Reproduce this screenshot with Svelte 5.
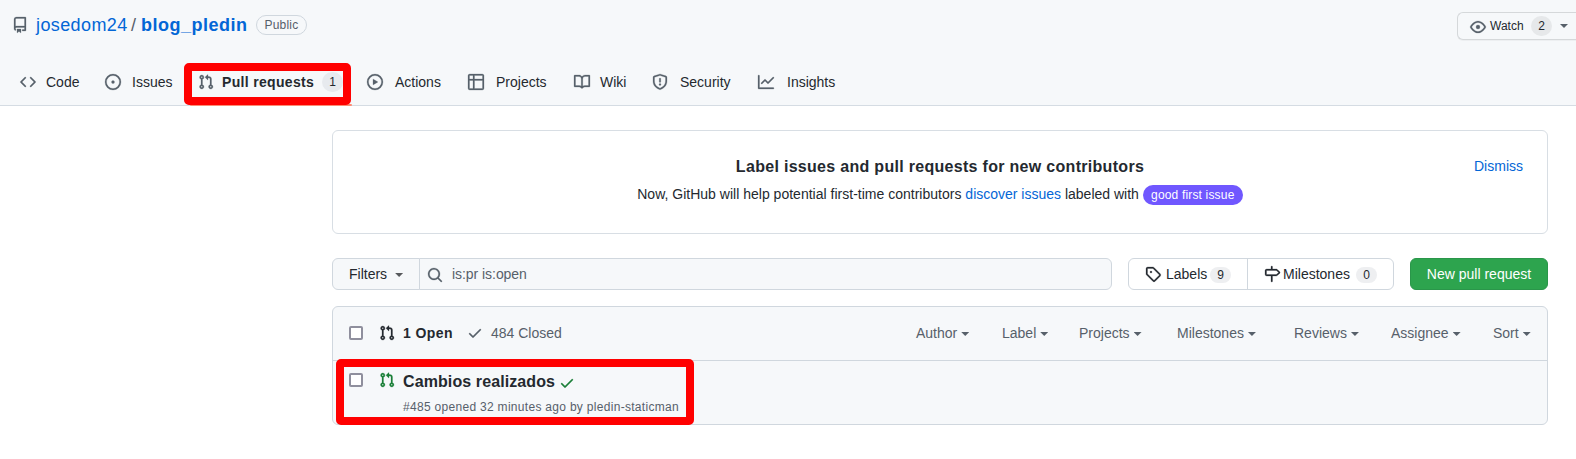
<script>
  const icons = {
    repo: 'M2 2.5A2.5 2.5 0 014.5 0h8.75a.75.75 0 01.75.75v12.5a.75.75 0 01-.75.75h-2.5a.75.75 0 110-1.5h1.75v-2h-8a1 1 0 00-.714 1.7.75.75 0 01-1.072 1.05A2.495 2.495 0 012 11.5v-9zm10.5-1V9h-8c-.356 0-.694.074-1 .208V2.5a1 1 0 011-1h8zM5 12.25v3.25a.25.25 0 00.4.2l1.45-1.087a.25.25 0 01.3 0L8.6 15.7a.25.25 0 00.4-.2v-3.25a.25.25 0 00-.25-.25h-3.5a.25.25 0 00-.25.25z',
    code: 'M4.72 3.22a.75.75 0 011.06 1.06L2.06 8l3.72 3.72a.75.75 0 11-1.06 1.06L.47 8.53a.75.75 0 010-1.06l4.25-4.25zm6.56 0a.75.75 0 10-1.06 1.06L13.94 8l-3.72 3.72a.75.75 0 101.06 1.06l4.25-4.25a.75.75 0 000-1.06l-4.25-4.25z',
    issue: 'M8 9.5a1.5 1.5 0 100-3 1.5 1.5 0 000 3zM8 0a8 8 0 100 16A8 8 0 008 0zM1.5 8a6.5 6.5 0 1113 0 6.5 6.5 0 01-13 0z',
    pr: 'M7.177 3.073L9.573.677A.25.25 0 0110 .854v4.792a.25.25 0 01-.427.177L7.177 3.427a.25.25 0 010-.354zM3.75 2.5a.75.75 0 100 1.5.75.75 0 000-1.5zm-2.25.75a2.25 2.25 0 113 2.122v5.256a2.251 2.251 0 11-1.5 0V5.372A2.25 2.25 0 011.5 3.25zM11 2.5h-1V4h1a1 1 0 011 1v5.628a2.251 2.251 0 101.5 0V5A2.5 2.5 0 0011 2.5zm1 10.25a.75.75 0 111.5 0 .75.75 0 01-1.5 0zM3.75 12a.75.75 0 100 1.5.75.75 0 000-1.5z',
    play: 'M1.5 8a6.5 6.5 0 1113 0 6.5 6.5 0 01-13 0zM8 0a8 8 0 100 16A8 8 0 008 0zM6.379 5.227A.25.25 0 006 5.442v5.117a.25.25 0 00.379.214l4.264-2.559a.25.25 0 000-.428L6.379 5.227z',
    table: 'M0 1.75C0 .784.784 0 1.75 0h12.5C15.216 0 16 .784 16 1.75v12.5A1.75 1.75 0 0114.25 16H1.75A1.75 1.75 0 010 14.25V1.75zM1.5 6.5v7.75c0 .138.112.25.25.25H5v-8H1.5zM5 5H1.5V1.75a.25.25 0 01.25-.25H5V5zm1.5 1.5v8h7.75a.25.25 0 00.25-.25V6.5h-8zm8-1.5h-8V1.5h7.75a.25.25 0 01.25.25V5z',
    book: 'M0 1.75A.75.75 0 01.75 1h4.253c1.227 0 2.317.59 3 1.501A3.744 3.744 0 0111.006 1h4.245a.75.75 0 01.75.75v10.5a.75.75 0 01-.75.75h-4.507a2.25 2.25 0 00-1.591.659l-.622.621a.75.75 0 01-1.06 0l-.622-.621A2.25 2.25 0 005.258 13H.75a.75.75 0 01-.75-.75V1.75zm8.755 3a2.25 2.25 0 012.25-2.25H14.5v9h-3.757c-.71 0-1.4.201-1.992.572l.004-7.322zm-1.504 7.324l.004-5.073-.002-2.253A2.25 2.25 0 005.003 2.5H1.5v9h3.757a3.75 3.75 0 011.994.574z',
    shield: 'M7.467.133a1.75 1.75 0 011.066 0l5.25 1.68A1.75 1.75 0 0115 3.48V7c0 1.566-.32 3.182-1.303 4.682-.983 1.498-2.585 2.813-5.032 3.855a1.7 1.7 0 01-1.33 0c-2.447-1.042-4.049-2.357-5.032-3.855C1.32 10.182 1 8.566 1 7V3.48a1.75 1.75 0 011.217-1.667l5.25-1.68zm.61 1.429a.25.25 0 00-.153 0l-5.25 1.68a.25.25 0 00-.174.238V7c0 1.358.275 2.666 1.057 3.86.784 1.194 2.121 2.34 4.366 3.297a.2.2 0 00.154 0c2.245-.956 3.582-2.104 4.366-3.298C13.225 9.666 13.5 8.36 13.5 7V3.48a.25.25 0 00-.174-.237l-5.25-1.68zM8.75 4.75a.75.75 0 00-1.5 0v3a.75.75 0 001.5 0v-3zM9 10.5a1 1 0 11-2 0 1 1 0 012 0z',
    graph: 'M1.5 1.75a.75.75 0 00-1.5 0v12.5c0 .414.336.75.75.75h14.5a.75.75 0 000-1.5H1.5V1.75zm14.28 2.53a.75.75 0 00-1.06-1.06L10 7.94 7.53 5.47a.75.75 0 00-1.06 0L3.22 8.72a.75.75 0 001.06 1.06L7 7.06l2.47 2.47a.75.75 0 001.06 0l5.25-5.25z',
    eye: 'M1.679 7.932c.412-.621 1.242-1.75 2.366-2.717C5.175 4.242 6.527 3.5 8 3.5c1.473 0 2.824.742 3.955 1.715 1.124.967 1.954 2.096 2.366 2.717a.119.119 0 010 .136c-.412.621-1.242 1.75-2.366 2.717C10.825 11.758 9.473 12.5 8 12.5c-1.473 0-2.824-.742-3.955-1.715C2.92 9.818 2.09 8.69 1.679 8.068a.119.119 0 010-.136zM8 2c-1.981 0-3.67.992-4.933 2.078C1.797 5.169.88 6.423.43 7.1a1.619 1.619 0 000 1.798c.45.678 1.367 1.932 2.637 3.024C4.329 13.008 6.019 14 8 14c1.981 0 3.67-.992 4.933-2.078 1.27-1.091 2.187-2.345 2.637-3.023a1.619 1.619 0 000-1.798c-.45-.678-1.367-1.932-2.637-3.023C11.671 2.992 9.981 2 8 2zm0 8a2 2 0 100-4 2 2 0 000 4z',
    search: 'M11.5 7a4.499 4.499 0 11-8.998 0A4.499 4.499 0 0111.5 7zm-.82 4.74a6 6 0 111.06-1.06l3.04 3.04a.75.75 0 11-1.06 1.06l-3.04-3.04z',
    tag: 'M2.5 7.775V2.75a.25.25 0 01.25-.25h5.025a.25.25 0 01.177.073l6.25 6.25a.25.25 0 010 .354l-5.025 5.025a.25.25 0 01-.354 0l-6.25-6.25a.25.25 0 01-.073-.177zm-1.5 0V2.75C1 1.784 1.784 1 2.75 1h5.025c.464 0 .91.184 1.238.513l6.25 6.25a1.75 1.75 0 010 2.474l-5.026 5.026a1.75 1.75 0 01-2.474 0l-6.25-6.25A1.75 1.75 0 011 7.775zM6 5a1 1 0 100 2 1 1 0 000-2z',
    milestone: 'M7.75 0a.75.75 0 01.75.75V3h3.634c.414 0 .814.147 1.13.414l2.07 1.75a1.75 1.75 0 010 2.672l-2.07 1.75a1.75 1.75 0 01-1.13.414H8.5v5.25a.75.75 0 11-1.5 0V10H2.75A1.75 1.75 0 011 8.25v-3.5C1 3.784 1.784 3 2.75 3H7V.75A.75.75 0 017.75 0zm0 8.5h4.384a.25.25 0 00.161-.06l2.07-1.75a.25.25 0 000-.38l-2.07-1.75a.25.25 0 00-.161-.06H2.75a.25.25 0 00-.25.25v3.5c0 .138.112.25.25.25h5z',
    check: 'M13.78 4.22a.75.75 0 010 1.06l-7.25 7.25a.75.75 0 01-1.06 0L2.22 9.28a.75.75 0 011.06-1.06L6 10.94l6.72-6.72a.75.75 0 011.06 0z',
  };
  const tabs = [
    { icon: 'code', label: 'Code' },
    { icon: 'issue', label: 'Issues' },
    { icon: 'pr', label: 'Pull requests', count: 1 },
    { icon: 'play', label: 'Actions' },
    { icon: 'table', label: 'Projects' },
    { icon: 'book', label: 'Wiki' },
    { icon: 'shield', label: 'Security' },
    { icon: 'graph', label: 'Insights' },
  ];
  const menus = ['Author', 'Label', 'Projects', 'Milestones', 'Reviews', 'Assignee', 'Sort'];
</script>

{#snippet icon(name)}
  <svg class="icon" width="16" height="16" viewBox="0 0 16 16" aria-hidden="true">
    <path fill-rule="evenodd" d={icons[name]} />
  </svg>
{/snippet}

<div class="page">
  <header>
    <div class="top">
      {@render icon('repo')}
      <a class="owner" href="#owner">josedom24</a>
      <span class="slash">/</span>
      <a class="repo" href="#repo">blog_pledin</a>
      <span class="public">Public</span>
      <button class="watch">
        {@render icon('eye')}
        <span class="watch-label">Watch</span>
        <span class="watch-count">2</span>
        <i class="caret"></i>
      </button>
    </div>
    <nav>
      {#each tabs as tab}
        {@render icon(tab.icon)}
        <a class="tab" class:selected={tab.count} href="#tab">
          {tab.label}{#if tab.count}<span class="tab-count">{tab.count}</span>{/if}
        </a>
      {/each}
    </nav>
    <div class="underline"></div>
    <div class="mark mark-tab"></div>
  </header>

  <main>
    <section class="banner">
      <h2>Label issues and pull requests for new contributors</h2>
      <p>
        <span class="lead">Now, GitHub will help potential first-time contributors</span>
        <a href="#discover">discover issues</a> labeled with
        <span class="pill">good first issue</span>
      </p>
      <a class="dismiss" href="#dismiss">Dismiss</a>
    </section>

    <div class="tools">
      <button class="filters">Filters <i class="caret"></i></button>
      <div class="search">{@render icon('search')}<span>is:pr is:open</span></div>
      <div class="group">
        <a class="labels" href="#labels">{@render icon('tag')}<span>Labels</span><b>9</b></a>
        <a class="milestones" href="#milestones">{@render icon('milestone')}<span>Milestones</span><b>0</b></a>
      </div>
      <button class="new">New pull request</button>
    </div>

    <section class="list">
      <div class="list-head">
        <span class="box"></span>
        <span class="open">{@render icon('pr')}<span>1 Open</span></span>
        <span class="closed">{@render icon('check')}<span>484 Closed</span></span>
        <div class="menus">
          {#each menus as menu}
            <span class="menu">{menu}<i class="caret"></i></span>
          {/each}
        </div>
      </div>
      <div class="row">
        <span class="box"></span>
        <span class="state">{@render icon('pr')}</span>
        <div class="info">
          <div class="title"><span>Cambios realizados</span>{@render icon('check')}</div>
          <div class="meta">#485 opened 32 minutes ago by pledin-staticman</div>
        </div>
      </div>
      <div class="mark mark-row"></div>
    </section>
  </main>
</div>

<style>
  :global(body) { background: #fff; overflow: hidden; }
  .page {
    width: 1576px;
    height: 459px;
    overflow: hidden;
    font: 14px/20px "Liberation Sans", Arial, sans-serif;
    color: #24292f;
  }
  .page * { box-sizing: border-box; white-space: nowrap; }
  a { color: #0366d6; text-decoration: none; }
  button { font: inherit; color: inherit; margin: 0; padding: 0; }
  .icon { display: block; flex: none; fill: currentColor; stroke: currentColor; stroke-width: 0.25px; overflow: visible; }
  .caret {
    flex: none;
    width: 8px;
    height: 4px;
    background: currentColor;
    clip-path: polygon(0 0, 100% 0, 50% 100%);
  }
  .mark { position: absolute; border: 8px solid #f00; border-radius: 5px; }

  header {
    position: relative;
    height: 106px;
    background: #f6f8fa;
    border-bottom: 1px solid #d5dce3;
  }
  .top {
    display: flex;
    align-items: center;
    height: 50px;
    padding-left: 12px;
    color: #57606a;
    font-size: 18px;
    letter-spacing: 0.4px;
  }
  .owner { margin-left: 8px; width: 95px; }
  .slash { width: 10px; }
  .repo { font-weight: bold; width: 107px; letter-spacing: 0.5px; }
  .owner, .slash, .repo { margin-top: -1px; }
  .public {
    margin-left: 8px;
    width: 51px;
    height: 20px;
    border: 1px solid #d0d7de;
    border-radius: 10px;
    font-size: 12px;
    line-height: 18px;
    letter-spacing: 0.2px;
    text-align: center;
  }
  .watch {
    display: flex;
    align-items: center;
    align-self: flex-start;
    margin: 12px 0 0 auto;
    width: 119px;
    height: 28px;
    padding-left: 12px;
    border: 1px solid #d5d8da;
    border-right: 0;
    border-radius: 6px 0 0 6px;
    background: #f6f8fa;
    box-shadow: 0 1px 0 rgba(27, 31, 36, 0.04);
    font-size: 12px;
    letter-spacing: 0;
    color: #57606a;
  }
  .watch .icon { margin-top: 2px; }
  .watch-label { width: 41px; margin-left: 4px; color: #24292f; text-align: left; }
  .watch-count {
    width: 21px;
    height: 20px;
    margin-right: 8px;
    border-radius: 10px;
    background: #e6e8ea;
    color: #24292f;
    text-align: center;
  }
  nav {
    display: grid;
    grid-template-columns: 26px 59px 27px 66px 24px 145px 28px 73px 28px 78px 26px 52px 28px 78px 29px 60px;
    align-items: center;
    height: 56px;
    padding: 8px 0 1px 20px;
    color: #57606a;
  }
  .tab { display: flex; color: #24292f; }
  .selected { font-weight: bold; letter-spacing: 0.32px; }
  .tab-count {
    width: 21px;
    height: 20px;
    margin-left: 8px;
    border-radius: 10px;
    background: #e7eaee;
    font-size: 12px;
    font-weight: normal;
    letter-spacing: 0;
    text-align: center;
  }
  .underline { position: absolute; left: 190px; top: 104px; width: 162px; height: 2px; border-radius: 1px; background: #fd8c73; }
  .mark-tab { left: 184px; top: 63px; width: 167px; height: 42px; }

  main { width: 1216px; margin: 24px 0 0 332px; }
  .banner {
    position: relative;
    height: 104px;
    border: 1px solid #d8dee4;
    border-radius: 6px;
    text-align: center;
  }
  h2 { margin: 26px 0 0; font-size: 16px; line-height: 20px; letter-spacing: 0.3px; }
  p { margin: 7px 0 0; line-height: 21px; }
  .lead { letter-spacing: 0.01px; }
  .pill {
    display: inline-block;
    height: 20px;
    width: 100px;
    border-radius: 10px;
    background: #7057ff;
    color: #fff;
    font-size: 12px;
    line-height: 20px;
    letter-spacing: 0.17px;
  }
  .dismiss { position: absolute; right: 24px; top: 25px; }

  .tools { display: flex; height: 32px; margin-top: 24px; }
  .filters {
    display: flex;
    align-items: center;
    gap: 8px;
    width: 88px;
    padding-left: 16px;
    border: 1px solid #d0d7de;
    border-radius: 6px 0 0 6px;
    background: #f6f8fa;
  }
  .filters .caret { margin-top: 2px; background: #57595c; }
  .search {
    display: flex;
    align-items: center;
    gap: 9px;
    width: 693px;
    margin-left: -1px;
    padding-left: 7px;
    border: 1px solid #d0d7de;
    border-radius: 0 6px 6px 0;
    background: #f6f8fa;
    color: #57606a;
  }
  .search .icon { margin-top: 2px; }
  .search span { letter-spacing: -0.05px; }
  .group { display: flex; margin-left: 16px; border: 1px solid #d0d7de; border-radius: 6px; }
  .group a { display: flex; align-items: center; color: #24292f; }
  .labels { width: 119px; padding-left: 16px; border-right: 1px solid #d0d7de; }
  .labels span { width: 40px; margin-left: 5px; }
  .milestones { width: 145px; padding-left: 16px; }
  .milestones span { width: 69px; margin-left: 3px; }
  .group b {
    width: 21px;
    height: 16px;
    margin: 1px 0 0 4px;
    border-radius: 8px;
    background: #eeeff1;
    font-size: 12px;
    line-height: 16px;
    font-weight: normal;
    text-align: center;
  }
  .new {
    width: 138px;
    margin-left: auto;
    border: 1px solid #2a964a;
    border-radius: 6px;
    background: #2da44e;
    color: #fff;
  }

  .list {
    position: relative;
    height: 119px;
    margin-top: 16px;
    border: 1px solid #d0d7de;
    border-radius: 6px;
    background: #f6f8fa;
  }
  .list-head {
    display: flex;
    align-items: center;
    height: 54px;
    padding: 0 0 2px 16px;
    border-bottom: 1px solid #d0d7de;
    color: #57606a;
  }
  .box {
    flex: none;
    width: 14px;
    height: 14px;
    border: 2px solid #8f8f9d;
    border-radius: 2px;
    background: #fff;
  }
  .open, .closed { display: flex; align-items: center; gap: 8px; }
  .open { margin-left: 16px; width: 88px; color: #24292f; font-weight: bold; letter-spacing: 0.4px; }
  .closed { width: 449px; gap: 8px; }
  .menus { display: grid; grid-template-columns: 86px 77px 98px 117px 97px 102px 40px; }
  .menu { display: flex; align-items: center; gap: 4px; }
  .menu .caret { margin-top: 3px; }
  .row { display: flex; padding: 12px 0 0 16px; }
  .state { margin: -1px 0 0 16px; color: #1a7f37; }
  .info { margin-left: 8px; }
  .title {
    display: flex;
    align-items: center;
    font-size: 16px;
    font-weight: bold;
    line-height: 18px;
    letter-spacing: 0.1px;
  }
  .title .icon { margin: 1px 0 -1px 4px; color: #1a7f37; }
  .meta { margin-top: 8px; font-size: 12px; line-height: 16px; letter-spacing: 0.3px; color: #57606a; }
  .mark-row { left: 3px; top: 52px; width: 358px; height: 66px; }
</style>
